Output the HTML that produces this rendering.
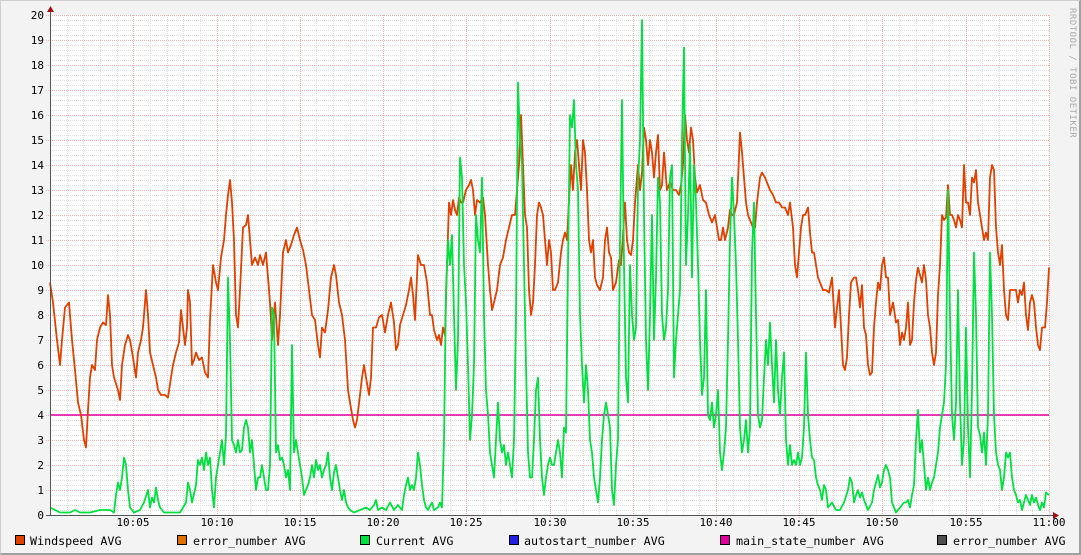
<!DOCTYPE html>
<html><head><meta charset="utf-8"><style>
html,body{margin:0;padding:0;}
body{width:1081px;height:555px;overflow:hidden;background:#f3f3f3;font-family:"DejaVu Sans Mono","Liberation Mono",monospace;}
#wrap{position:absolute;left:0;top:0;border-top:1px solid #cfcfcf;border-left:1px solid #cfcfcf;border-right:2px solid #a0a0a0;border-bottom:2px solid #a0a0a0;box-sizing:border-box;width:1081px;height:555px;}
svg{position:absolute;left:0;top:0;}
</style></head><body>
<div id="wrap"></div>
<svg id="g" width="1081" height="555" xmlns="http://www.w3.org/2000/svg" font-family="DejaVu Sans Mono, Liberation Mono, monospace">
<rect x="50" y="15" width="999" height="500" fill="#fff"/>
<g id="grid"></g>
<g id="labels" font-size="11" fill="#000"></g>
<text transform="translate(1070,8) rotate(90)" font-size="9" fill="#aaa" letter-spacing="0.5">RRDTOOL / TOBI OETIKER</text>
<line x1="50" y1="415" x2="1049" y2="415" stroke="#e000a0" stroke-width="1.6"/>
<polyline fill="none" stroke="#e04000" stroke-width="1.8" vector-effect="non-scaling-stroke" stroke-linejoin="round" transform="translate(0,515) scale(1,-25)" points="50,9.3 53,8.5 57,7 60,6 62,7 65,8.3 69,8.5 72,7 75,5.8 78,4.5 81,4 84,3 86,2.7 88,4.2 90,5.5 92,6 95,5.8 97,7 100,7.5 103,7.7 106,7.6 108,8.8 110,8 112,6 114,5.5 118,5 120,4.6 122,6 125,6.8 128,7.2 130,7 133,6.3 136,5.5 138,6.5 141,7 143,7.5 146,9 148,8 150,6.5 153,6 156,5.5 158,5 161,4.8 165,4.8 168,4.7 171,5.5 173,6 176,6.5 179,6.9 181,8.2 183,7.5 185,6.8 187,7.5 188,9 190,8.5 192,6 194,6.2 196,6.5 199,6.2 202,6.3 205,5.7 208,5.5 210,7.8 213,10 216,9.3 218,9 221,10.3 224,11 226,12 228,12.8 230,13.4 232,12.5 234,11 236,8 238,7.5 240,9 243,11.5 246,11.6 248,12 250,11 252,10 255,10.3 258,10 260,10.4 263,10 266,10.5 268,9.5 270,8.5 272,7 275,8.5 278,6.8 280,8 283,10.5 286,11 288,10.5 291,10.8 294,11.2 297,11.5 300,11 303,10.6 306,10 309,9 312,8 315,7.8 318,6.8 320,6.3 322,7.5 325,7.3 328,8.2 331,9.5 334,10 336,9.6 339,8.5 342,8 345,7 348,5 350,4.5 353,3.8 355,3.5 357,3.8 360,4.8 362,5.5 364,6 366,5.5 369,4.8 371,5.5 373,7.5 376,7.5 379,7.9 382,8 385,7.3 388,8 391,8.5 394,7.7 396,6.6 398,6.8 400,7.6 403,8 406,8.4 409,9 411,9.5 413,8.8 415,7.8 418,10.4 421,10 424,10 427,9.3 430,8 432,8 434,7.4 437,7 439,7.2 441,6.8 443,7.5 445,7.2 447,10 449,12.5 451,12 453,12.6 455,12.2 457,12 459,12.7 461,12.5 463,12.5 466,13 469,13.2 471,13.4 473,13 475,12 477,12.6 480,12.5 483,12.7 485,12 488,10 490,9 492,8.2 494,8.5 497,9 500,10 503,10.3 506,11 509,11.5 512,12 515,12 517,13 519,14 521,16 523,14 525,12 527,11.5 529,9 531,8 533,8.5 535,10 537,12 539,12.5 541,12.3 543,12 545,11 547,10 549,11 551,10.5 553,9 555,9 558,9.3 561,10.5 563,11 565,11.3 567,11 569,12.6 571,14 573,13 575,14.5 577,15 579,14 581,13 583,15 585,14.5 587,13 589,11 591,10.5 593,11 595,9.5 597,9.2 600,9 603,9.5 605,11 607,11.5 609,10.5 611,10.3 613,9 616,9.3 619,10.2 621,10 623,11.2 625,12.5 627,11 629,10.5 631,10.4 633,11 635,12.5 638,14 640,13 642,13.7 644,15.5 646,15 648,14 650,15 652,14.5 654,13.5 656,14.5 658,15.2 660,13 662,13.2 664,14.5 667,13 670,13.3 673,13 676,13 679,12.8 681,13.2 683,14 685,16 687,15 689,14.5 691,15.5 693,15 695,13.5 697,12.9 700,13.2 703,12.6 706,12.5 709,12 712,11.7 715,12 717,11.5 719,11 721,11 723,11.5 725,11 728,11.5 730,12.2 732,12 734,12 737,12.5 740,15.3 742,14.5 744,13.5 746,12.5 748,12 750,11.8 753,11.5 755,11.5 757,12.5 760,13.5 762,13.7 765,13.5 768,13.2 770,13 773,12.8 776,12.5 779,12.5 782,12.3 785,12.3 788,12 790,12.5 793,11.5 795,10 797,9.5 799,10.5 801,11.5 803,12 805,12 808,12.3 810,11.3 812,10.5 814,10.5 816,10 818,9.5 821,9.2 823,9 826,9 829,8.9 832,9.5 835,7.5 837,8.3 839,9 841,7.5 843,6 845,5.8 847,6.3 849,8 851,9.3 854,9.5 856,9.5 858,9 860,8.3 862,9.2 864,7.5 866,7.2 868,6 870,5.6 872,5.7 874,7.5 876,8.5 878,9.3 880,9 882,10 884,10.3 886,9.5 888,9.5 890,8 893,8.5 896,7.7 898,7.8 900,6.8 902,7.3 904,7 906,7.5 908,8.5 910,6.8 912,7 914,8.5 916,9.4 918,9.9 920,9.6 922,9.3 924,10 926,9.4 928,8 930,7.5 932,6.5 934,6 936,6.5 938,8.8 940,10 942,12 944,11.8 946,11.9 948,13.2 950,12 952,12 954,11.8 956,11.5 958,12 960,11.8 962,11.5 964,14 966,12.5 968,12.5 970,12 972,13.5 974,13.3 976,13.8 978,12.5 980,12 982,11.5 984,11 986,11.3 988,11 990,13.5 992,14 994,13.8 996,11.5 998,10.5 1000,10 1002,10.8 1004,9 1006,8 1008,7.8 1010,9 1013,9 1016,9 1018,8.5 1020,9 1022,8.8 1024,9.3 1026,8 1028,7.4 1030,8.5 1032,8.8 1034,8.5 1036,7.5 1038,6.8 1040,6.6 1042,7.5 1045,7.5 1047,8.5 1049,9.9"/>
<polyline fill="none" stroke="#00e040" stroke-width="1.8" vector-effect="non-scaling-stroke" stroke-linejoin="round" transform="translate(0,515) scale(1,-25)" points="50,0.3 55,0.2 60,0.1 70,0.1 75,0.2 80,0.1 90,0.1 100,0.2 110,0.2 114,0.1 116,0.8 118,1.3 120,1 122,1.5 124,2.3 126,2 128,1 130,0.3 134,0.1 140,0.2 144,0.5 148,1 150,0.3 152,0.7 154,0.5 156,1.1 158,0.6 160,0.3 164,0.1 170,0.1 180,0.1 186,0.5 188,1.3 190,1 192,0.5 196,1.2 198,2.2 200,2 202,2.3 204,1.8 206,2.5 208,2 210,2.3 212,1 214,0.3 216,1.5 218,2 220,2.5 222,3 224,2 226,3.2 228,9.5 230,7 232,3 234,2.8 236,2.5 238,3 240,2.5 242,2.6 244,3.5 246,3.8 248,3.5 250,2.5 252,3 254,2 256,1 258,1.5 260,1.5 262,2 264,1.5 266,1 268,1 270,2 272,8.3 274,8 276,2.5 278,2.8 280,2.2 282,2.3 284,2 286,1.5 288,1.8 290,1 292,6.8 294,2.5 296,3 298,2.5 300,2 302,1.5 304,0.8 306,1 308,1.2 310,1.5 312,2 314,1.5 316,2.2 318,1.8 320,2 322,1.5 324,1.8 326,2 328,2.5 330,1.5 332,1 334,1.7 336,2 338,1.5 340,1 342,0.6 344,1 346,0.5 348,0.3 350,0.2 354,0.1 360,0.2 366,0.3 370,0.2 374,0.4 376,0.6 378,0.2 382,0.3 386,0.2 390,0.5 394,0.2 398,0.4 402,0.2 404,0.8 406,1.2 408,1.5 410,1 412,1.2 414,1 416,1.5 418,2.5 420,2 422,1.2 424,0.6 426,0.3 428,0.2 432,0.5 434,0.2 438,0.3 440,0.5 442,0.3 444,3 446,9 448,11 450,10 452,11.2 454,8 456,5 458,7 460,14.3 462,13.5 464,10 466,8.5 468,6 470,3 472,4 474,6 476,12 478,11 480,10.5 482,13.5 484,8 486,5 488,4 490,2.5 492,2 494,1.5 496,3 498,4.5 500,3 502,2.5 504,2.8 506,2 508,2.5 510,2 512,1.5 514,3 516,8 518,17.3 520,15 522,14 524,10 526,6 528,2.5 530,1.5 532,1.5 534,3 536,5 538,5.5 540,3 542,1.5 544,0.8 546,1.5 548,2 550,2.3 552,2 554,2 556,2.5 558,3 560,2.5 562,1.5 564,3.5 566,3.3 568,10 570,16 572,15.5 574,16.6 576,14 578,13 580,8 582,6 584,4.5 586,6 588,5 590,3 592,2.5 594,1.5 596,1 598,0.5 600,1.5 602,3 604,4 606,4.5 608,4 610,3.5 612,1 614,0.4 616,2 618,3 620,11 622,16.6 624,10 626,5.5 628,4.5 630,10 632,8 634,7 636,7.5 638,13.3 640,15 642,19.8 644,12 646,7 648,5 650,8 652,12 654,7 656,9.5 658,13.5 660,12.5 662,8 664,7 666,7.5 668,9 670,13.5 672,14 674,5.5 676,7 678,8 680,9 682,15 684,18.7 686,10 688,12 690,14.8 692,9.5 694,14 696,12.5 698,10 700,7 702,4.8 704,5.5 706,9 708,4 710,3.8 712,4.5 714,3.5 716,4 718,5 720,2.5 722,1.8 724,2.5 726,3.5 728,7 730,11 732,13.5 734,12 736,10 738,7 740,3.5 742,2.5 744,3 746,3.8 748,2.5 750,3.5 752,10.5 754,12.5 756,8 758,4 760,3.5 762,3.8 764,5.5 766,7 768,6 770,7.7 772,6 774,4.5 776,7 778,5 780,4 782,5.5 784,6.5 786,3 788,2 790,2.8 792,2 794,2.2 796,2 798,2.5 800,2 802,2.3 804,3.5 806,6.5 808,4 810,3 812,2.3 814,2.2 816,1.5 818,1.2 820,1 822,0.6 824,1.2 826,1 828,0.3 832,0.5 836,0.2 840,0.2 844,0.5 848,1 850,1.5 852,1.3 854,0.5 856,0.8 858,1 860,0.7 862,0.9 864,0.6 866,0.4 868,0.2 872,0.5 874,1 876,1.3 878,1.6 880,1.1 882,1.3 884,1.8 886,2 888,1.8 890,1.5 892,0.5 894,0.3 896,0.1 900,0.3 902,0.4 904,0.5 906,0.5 908,0.6 910,0.3 912,0.8 914,1.2 916,3 918,4.2 920,2.5 922,3 924,2 926,1 928,1.5 930,1 932,1.3 934,1.5 936,2 938,2.5 940,3.5 942,4 944,4.5 946,6 948,13 950,8 952,4 954,3 956,4.5 958,9 960,4.5 962,2 964,3 966,7.5 968,3.5 970,1.5 972,5 974,10.5 976,8 978,3.5 980,3.2 982,2.5 984,3.3 986,2 988,4 990,10.5 992,8 994,4 996,2.5 998,2 1000,1.8 1002,1 1004,1.5 1006,2.5 1008,2.3 1010,2.5 1012,1.5 1014,1 1016,0.8 1018,0.5 1020,0.6 1022,0.2 1024,0.5 1026,0.8 1028,0.6 1030,0.4 1032,0.8 1034,0.5 1036,0.7 1038,0.4 1040,0.2 1042,0.5 1044,0.3 1046,0.9 1049,0.8"/>
<line x1="50.5" y1="10" x2="50.5" y2="516" stroke="#555" stroke-width="1"/>
<line x1="46" y1="515.5" x2="1054" y2="515.5" stroke="#555" stroke-width="1"/>
<polygon points="47,12 54,12 50.5,6" fill="#a01010"/>
<polygon points="1053,512 1053,519 1059,515.5" fill="#a01010"/>
<g font-size="11.7" fill="#000">
<rect x="15.5" y="535.5" width="9" height="9" fill="#e04000" stroke="#000"/><text x="30" y="545">Windspeed AVG</text>
<rect x="177.5" y="535.5" width="9" height="9" fill="#e07000" stroke="#000"/><text x="193" y="545">error_number AVG</text>
<rect x="360.5" y="535.5" width="9" height="9" fill="#00e040" stroke="#000"/><text x="376" y="545">Current AVG</text>
<rect x="509.5" y="535.5" width="9" height="9" fill="#2020e0" stroke="#000"/><text x="524" y="545">autostart_number AVG</text>
<rect x="720.5" y="535.5" width="9" height="9" fill="#e000a0" stroke="#000"/><text x="736" y="545">main_state_number AVG</text>
<rect x="937.5" y="535.5" width="9" height="9" fill="#505050" stroke="#000"/><text x="953" y="545">error_number AVG</text>
</g>
</svg>
<script>
var ns="http://www.w3.org/2000/svg",g=document.getElementById("grid"),lb=document.getElementById("labels");
function L(x1,y1,x2,y2,c){var l=document.createElementNS(ns,"line");l.setAttribute("x1",x1);l.setAttribute("y1",y1);l.setAttribute("x2",x2);l.setAttribute("y2",y2);l.setAttribute("stroke",c);l.setAttribute("stroke-dasharray","1,1");l.setAttribute("stroke-width","1");g.appendChild(l);}
function T(x,y,s,a){var t=document.createElementNS(ns,"text");t.setAttribute("x",x);t.setAttribute("y",y);t.setAttribute("text-anchor",a);t.textContent=s;lb.appendChild(t);}
var px=999/60;
for(var i=0;i<=100;i++){var y=515-i*5+0.5;if(i%5)L(50,y,1049,y,"#dedede");}
for(var m=1;m<=60;m++){var x=Math.round(50+m*px)+0.5;if(m%5)L(x,15,x,515,"#dedede");}
for(var i=1;i<=20;i++){var y=515-i*25+0.5;L(46,y,1049,y,"#f2b0b0");}
for(var m=5;m<=60;m+=5){var x=Math.round(50+m*px)+0.5;L(x,15,x,519,"#f2b0b0");}
for(var i=0;i<=20;i++){T(44,515-i*25+4,String(i),"end");}
for(var m=5;m<=60;m+=5){var hh=10+Math.floor(m/60),mm=m%60;T(Math.round(50+m*px),526,hh+":"+(mm<10?"0":"")+mm,"middle");}
</script>
</body></html>
